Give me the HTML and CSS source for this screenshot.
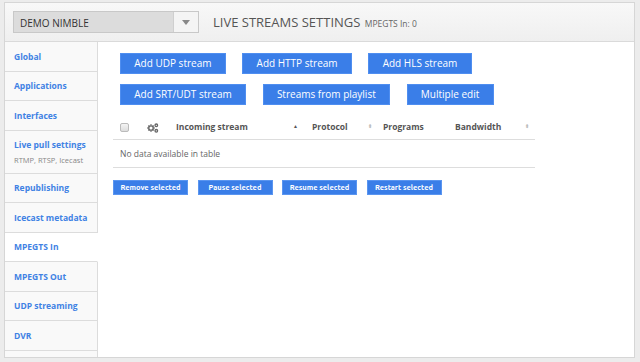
FILE: index.html
```html
<!DOCTYPE html>
<html>
<head>
<meta charset="utf-8">
<link rel="stylesheet" href="styles.css">
</head>
<body>
<div class="page">
  <div class="header">
    <div class="select">
      <span class="select-text">DEMO NIMBLE</span>
      <span class="select-arrow"><svg width="8" height="5" viewBox="0 0 8 5"><path d="M0 0h8L4 5z" fill="#888"/></svg></span>
    </div>
    <h1 class="title">LIVE STREAMS SETTINGS <small>MPEGTS In: 0</small></h1>
  </div>
  <div class="main">
    <ul class="sidebar">
      <li>Global</li>
      <li>Applications</li>
      <li>Interfaces</li>
      <li class="two">Live pull settings<span>RTMP, RTSP, Icecast</span></li>
      <li>Republishing</li>
      <li>Icecast metadata</li>
      <li class="active">MPEGTS In</li>
      <li>MPEGTS Out</li>
      <li>UDP streaming</li>
      <li>DVR</li>
      <li></li>
    </ul>
    <div class="content">
      <div class="btn-row">
        <button class="btn">Add UDP stream</button>
        <button class="btn">Add HTTP stream</button>
        <button class="btn">Add HLS stream</button>
      </div>
      <div class="btn-row">
        <button class="btn">Add SRT/UDT stream</button>
        <button class="btn">Streams from playlist</button>
        <button class="btn">Multiple edit</button>
      </div>
      <table class="grid">
        <thead>
          <tr>
            <th class="c-check"><span class="checkbox"></span></th>
            <th class="c-gear"><svg width="12" height="10" viewBox="0 0 12 10"><g fill="none" stroke="#666" stroke-width="1.3"><circle cx="4" cy="5" r="2.2"/><circle cx="9.3" cy="2.3" r="1.3"/><circle cx="9.3" cy="7.8" r="1.3"/></g><g stroke="#666" stroke-width="1.4"><path d="M4 1.2v1.4M4 7.4v1.4M0.3 5h1.4M6.3 5h1.4M1.4 2.4l1 1M5.6 6.6l1 1M1.4 7.6l1-1M5.6 3.4l1-1"/></g></svg></th>
            <th class="c-in">Incoming stream<span class="sort up">▲</span></th>
            <th class="c-proto">Protocol<span class="sort">⬍</span></th>
            <th class="c-prog">Programs</th>
            <th class="c-bw">Bandwidth<span class="sort">⬍</span></th>
          </tr>
        </thead>
        <tbody>
          <tr><td colspan="6" class="empty">No data available in table</td></tr>
        </tbody>
      </table>
      <div class="small-row">
        <button class="sbtn">Remove selected</button>
        <button class="sbtn">Pause selected</button>
        <button class="sbtn">Resume selected</button>
        <button class="sbtn">Restart selected</button>
      </div>
    </div>
  </div>
</div>
</body>
</html>
```
FILE: styles.css
```css
* { box-sizing: border-box; }
html, body { margin: 0; padding: 0; }
body {
  background: #ececec;
  font-family: "Open Sans", "Liberation Sans", sans-serif;
  color: #555;
  width: 640px;
  height: 362px;
  overflow: hidden;
}
.page {
  margin: 2px 5px 0 4px;
  height: 356px;
  border: 1px solid #d6d6d6;
  background: #fff;
  display: flex;
  flex-direction: column;
  overflow: hidden;
}
.header {
  height: 39px;
  flex: none;
  background: linear-gradient(#f8f8f8, #efefef);
  border-bottom: 1px solid #dadada;
  display: flex;
  align-items: center;
  padding-left: 8px;
}
.select {
  width: 186px;
  height: 22px;
  border: 1px solid #c8c8c8;
  background: #dcdcdc;
  display: flex;
  align-items: center;
}
.select-text {
  flex: 1;
  font-size: 10px;
  color: #333;
  padding-left: 6px;
  padding-top: 1px;
}
.select-arrow {
  width: 25px;
  height: 20px;
  background: #f4f4f4;
  border-left: 1px solid #cfcfcf;
  display: flex;
  align-items: center;
  justify-content: center;
}
.title {
  margin: 0 0 0 14px;
  font-size: 13px;
  font-weight: normal;
  color: #555;
  letter-spacing: 0;
}
.title small {
  font-size: 8.5px;
  color: #666;
  margin-left: 1px;
}
.main {
  flex: 1;
  display: flex;
  min-height: 0;
}
.sidebar {
  list-style: none;
  margin: 0;
  padding: 0;
  width: 93px;
  flex: none;
  background: #fff;
}
.sidebar li {
  height: 29.5px;
  background: #f9f9f9;
  border-bottom: 1px solid #dcdcdc;
  border-right: 1px solid #dcdcdc;
  padding-left: 9px;
  display: flex;
  flex-direction: column;
  justify-content: center;
  font-size: 8.5px;
  font-weight: bold;
  color: #3f82e4;
}
.sidebar li.two {
  height: 43px;
}
.sidebar li.two span {
  font-weight: normal;
  color: #888;
  font-size: 7.5px;
  margin-top: 5px;
}
.sidebar li.active {
  background: #fff;
  border-right-color: #fff;
}
.content {
  flex: 1;
  padding: 11px 0 0 15px;
  background: #fff;
}
.btn-row {
  display: flex;
  gap: 16.5px;
  padding-left: 7px;
  margin-bottom: 10px;
}
.btn {
  height: 21px;
  border: 1px solid #4f8ef0;
  background: #3a7ee8;
  color: #fff;
  font-family: "Open Sans", "Liberation Sans", sans-serif;
  font-size: 10px;
  padding: 0 13.3px;
  margin: 0;
  line-height: 19px;
}
.grid {
  width: 422px;
  border-collapse: collapse;
  margin-top: 5px;
  font-size: 8.5px;
}
.grid th {
  height: 24px;
  text-align: left;
  font-weight: bold;
  color: #555;
  border-bottom: 1px solid #ddd;
  padding: 0;
  white-space: nowrap;
}
.c-check { width: 34px; padding-left: 7px !important; }
.c-gear { width: 29px; }
.c-in { width: 136px; }
.c-proto { width: 71px; }
.c-prog { width: 72px; }
.checkbox {
  display: inline-block;
  width: 9px;
  height: 9px;
  border: 1px solid #bbb;
  border-radius: 2px;
  background: linear-gradient(#f4f4f4, #ddd);
  vertical-align: middle;
}
.c-gear svg { vertical-align: middle; }
.sort {
  float: right;
  margin-right: 11px;
  font-size: 5px;
  color: #bbb;
  line-height: 11px;
}
.sort.up { color: #555; margin-right: 14px; }
.c-bw .sort { margin-right: 6px; }
.grid td.empty {
  height: 28px;
  padding-left: 7px;
  padding-top: 1px;
  font-size: 8.5px;
  color: #666;
  border-bottom: 1px solid #ddd;
}
.small-row {
  display: flex;
  gap: 9.5px;
  margin-top: 12px;
}
.sbtn {
  width: 75px;
  height: 15px;
  border: 1px solid #5a95f0;
  background: #3a7ee8;
  color: #fff;
  font-family: "Ubuntu", "DejaVu Sans Condensed", "Open Sans", sans-serif;
  font-weight: bold;
  font-size: 7.5px;
  padding: 0;
  margin: 0;
}
```
